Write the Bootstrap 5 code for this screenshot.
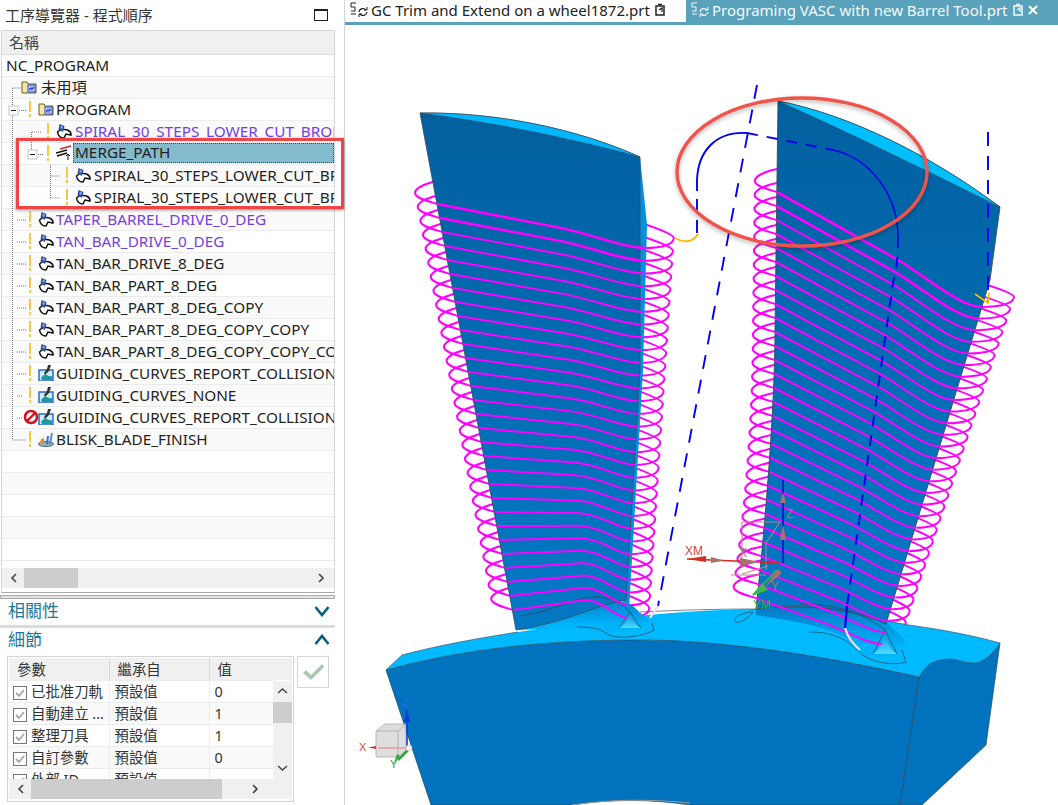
<!DOCTYPE html>
<html lang="zh-Hant">
<head>
    <meta charset="UTF-8">
    <meta name="viewport" content="width=device-width, initial-scale=1.0">
    <title>工序導覽器</title>
    <link href="https://cdn.jsdelivr.net/npm/bootstrap@5.3.0/dist/css/bootstrap.min.css" rel="stylesheet">
    <style>
        html, body { height: 805px; overflow: hidden; }
        body { font-family: "Noto Sans", "Noto Sans CJK TC", sans-serif; font-size: 15.3px; color: #222; background: #fff; }
        .nav-pane { width: 345px; height: 805px; flex: none; border-right: 1px solid #d4d4d4; }
        .pane-title { height: 30px; padding: 0 16px 0 5px; color: #333; font-size: 15px; }
        .max-box { width: 14px; height: 12px; border: 1px solid #222; border-top-width: 2px; }
        .tree-box { width: 334px; height: 563px; margin-left: 1px; border: 1px solid #d6d6d6; border-bottom-color: #aaa; }
        .tree-head { height: 24px; background: #f0f0f0; border-bottom: 1px solid #dcdcdc; padding-left: 7px; color: #444; font-size: 15px; }
        .tree-row { height: 22px; padding-bottom: 2px; border-bottom: 1px solid #ececec; white-space: nowrap; overflow: hidden; line-height: 20px; }
        .tree-row:nth-child(even) { background: #fafafa; }
        .lvl0 { padding-left: 4px; }
        .lvl1 { padding-left: 27px; }
        .lvl2 { padding-left: 45px; }
        .lvl3 { padding-left: 64px; }
        .lvl2 .item-ico, .lvl3 .item-ico { margin-right: 3px; }
        .warn { width: 2px; height: 16px; margin-right: 7px; flex: none; background: linear-gradient(#fdc63f 0 11px, transparent 11px 13px, #fdc63f 13px); }
        .warn-none { width: 16px; height: 16px; flex: none; }
        .item-ico { width: 16px; height: 16px; flex: none; margin-right: 2px; }
        .item-purple { color: #7440e0; }
        .item-picked { background: #84bacd; outline: 1px dotted #5a3a3a; outline-offset: -1px; height: 20px; line-height: 19px; padding: 0 0 0 2px; flex: 1; margin-left: -2px; }
        .tree-guides { left: 0; top: 0; pointer-events: none; }
        .call-box { left: 16px; top: 138px; width: 328px; height: 71px; border: 3px solid #f04545; box-shadow: 0 1px 3px rgba(0,0,0,.45); }
        .hbar { height: 20px; background: #f0f0f0; }
        .hbar-thumb { background: #cdcdcd; height: 100%; }
        .sash { height: 4px; margin: 2px 0 0 0; width: 335px; background: #e4e4e4; border: 1px solid #aaa; }
        .fold-row { height: 26px; width: 335px; padding: 0 5px 2px 8px; color: #1f7799; font-size: 17px; }
        .fold-line { height: 3px; width: 335px; background: #dcdcdc; }
        .grid-wrap { margin: 2px 0 0 7px; }
        .grid-box { width: 287px; height: 146px; border: 1px solid #d4d4d4; padding: 1px; }
        .param-table { table-layout: fixed; width: 264px; font-size: 14.4px; --bs-table-bg: transparent; }
        .param-table td, .param-table th { padding: 0 0 0 5px; height: 22px; line-height: 21px; font-weight: 400; white-space: nowrap; overflow: hidden; border-bottom: 1px solid #ececec; color: #333; }
        .param-table th { background: #f0f0f0; border-right: 1px solid #d8d8d8; padding-left: 8px; height: 22px; }
        .param-table tbody tr:nth-child(even) td { background: #fafafa; }
        .param-table td + td { border-left: 1px solid #ececec; }
        .head-strip { height: 22px; background: #f0f0f0; }
        .body-clip { height: 98px; }
        .vbar { width: 19px; background: #f0f0f0; }
        .vbar-thumb { height: 21px; background: #cdcdcd; margin-top: 0; }
        .apply-btn { width: 32px; height: 32px; margin-left: 3px; border: 1px solid #d4d4d4; border-radius: 0; padding: 0; }
        .tab-strip { height: 25px; border-bottom: 3px solid #5aa1bb; font-size: 15px; }
        .tab-idle { padding: 0 0 2px 4px; width: 341px; color: #222; }
        .tab-live { background: #5aa1bb; color: #f4fafc; flex: 1; padding: 0 0 2px 4px; }
        .tab-ico { width: 22px; height: 18px; flex: none; }
        .mini-ico { width: 12px; height: 14px; flex: none; }
        .scene { width: 713px; height: 780px; display: block; }
        .scene text { font-family: "Liberation Sans", sans-serif; }
    </style>
</head>
<body class="d-flex">

<svg width="0" height="0" class="position-absolute">
    <defs>
        <symbol id="ico-folder" viewBox="0 0 16 16">
            <path d="M1 3h5l1 2h8v9H1z" fill="#f3e6a6" stroke="#6d5f1e"/>
            <rect x="7" y="6" width="7" height="7" fill="#fff" stroke="#1a3fd0"/>
            <path d="M8.500 8h4M12.500 8v1.500h-4V11h4" fill="none" stroke="#1a3fd0"/>
        </symbol>
        <symbol id="ico-op" viewBox="0 0 16 16">
            <path d="M1.500 9l4-3 6 1q4 2 3.500 5l-5-1-2 4q-5.500 0-6.500-6z" fill="#fff" stroke="#111" stroke-width="1.500"/>
            <path d="M3.500 1l5 2-1.500 6-4.500-2.500z" fill="#2f4f9e"/>
            <path d="M5 2.500l2 1-.8 2.500-2-1z" fill="#8aa2d4"/>
        </symbol>
        <symbol id="ico-merge" viewBox="0 0 16 16">
            <path d="M0 8l11-3M1 11l10-3" stroke="#111" stroke-width="1.400" fill="none"/>
            <path d="M4 4l11-3" stroke="#c8232c" stroke-width="1.400"/>
            <path d="M12 15V9M10 11l2-2 2 2" stroke="#111" fill="none"/>
        </symbol>
        <symbol id="ico-guide" viewBox="0 0 16 16">
            <rect x="1" y="5" width="14" height="11" fill="#cfeaf9" stroke="#1a62d0" stroke-width="1.400"/>
            <path d="M3 13q3-5 6-3t5 1v4H4z" fill="#1a9a9a"/>
            <path d="M10 0h3l-2 6-4 4-1-2 3-4z" fill="#333"/>
        </symbol>
        <symbol id="ico-blisk" viewBox="0 0 16 16">
            <ellipse cx="8" cy="13" rx="7.500" ry="2.500" fill="#8fb3bd" stroke="#4a6a75"/>
            <path d="M2 12l1-4 3-1v6z" fill="#f08a24"/>
            <path d="M8 13l1-8h2l-1 8z" fill="#2f6fd0"/>
            <path d="M11 13l2-11h2l-2 11z" fill="#5a86d8"/>
        </symbol>
        <symbol id="ico-stop" viewBox="0 0 16 16">
            <circle cx="8" cy="8" r="6" fill="#fff" stroke="#d3121f" stroke-width="2.600"/>
            <path d="M3.500 12.500l9-9" stroke="#d3121f" stroke-width="2.400"/>
        </symbol>
        <symbol id="ico-check" viewBox="0 0 14 14">
            <rect x=".5" y=".5" width="13" height="13" fill="#fff" stroke="#777"/>
            <path d="M3 7l3 3 5-6" fill="none" stroke="#a5a5a5" stroke-width="1.800"/>
        </symbol>
        <symbol id="ico-part" viewBox="0 0 22 18">
            <path d="M2 2h5M2 2v4h4v4H2M2 13h5" fill="none" stroke="currentColor"/>
            <path d="M10 11a4 4 0 0 1 7-2M18 11a4 4 0 0 1-7 2" fill="none" stroke="currentColor" stroke-width="1.300"/>
            <path d="M15 9h3V6M13 13h-3v3" fill="none" stroke="currentColor"/>
        </symbol>
        <symbol id="ico-doc" viewBox="0 0 12 14">
            <path d="M2 3h8v9H2z" fill="none" stroke="currentColor" stroke-width="1.500"/>
            <path d="M4 1.500h4M5 7l3-2v4" fill="none" stroke="currentColor" stroke-width="1.300"/>
        </symbol>
    </defs>
</svg>

<aside class="nav-pane position-relative d-flex flex-column">
    <div class="pane-title d-flex align-items-center justify-content-between">
        <span>工序導覽器 - 程式順序</span>
        <span class="max-box"></span>
    </div>

    <div class="tree-box position-relative d-flex flex-column">
        <div class="tree-head d-flex align-items-center">名稱</div>
        <div class="flex-grow-1 overflow-hidden">
            <div class="tree-row d-flex align-items-center lvl0">NC_PROGRAM</div>
            <div class="tree-row d-flex align-items-center" style="padding-left:19px"><svg class="item-ico" style="margin-right:4px"><use href="#ico-folder"/></svg>未用項</div>
            <div class="tree-row d-flex align-items-center lvl1"><i class="warn"></i><svg class="item-ico"><use href="#ico-folder"/></svg>PROGRAM</div>
            <div class="tree-row d-flex align-items-center lvl2 item-purple"><i class="warn"></i><svg class="item-ico"><use href="#ico-op"/></svg>SPIRAL_30_STEPS_LOWER_CUT_BROKEN</div>
            <div class="tree-row d-flex align-items-center lvl2"><i class="warn"></i><svg class="item-ico"><use href="#ico-merge"/></svg><span class="item-picked">MERGE_PATH</span></div>
            <div class="tree-row d-flex align-items-center lvl3"><i class="warn"></i><svg class="item-ico"><use href="#ico-op"/></svg>SPIRAL_30_STEPS_LOWER_CUT_BROKEN</div>
            <div class="tree-row d-flex align-items-center lvl3"><i class="warn"></i><svg class="item-ico"><use href="#ico-op"/></svg>SPIRAL_30_STEPS_LOWER_CUT_BROKEN</div>
            <div class="tree-row d-flex align-items-center lvl1 item-purple"><i class="warn"></i><svg class="item-ico"><use href="#ico-op"/></svg>TAPER_BARREL_DRIVE_0_DEG</div>
            <div class="tree-row d-flex align-items-center lvl1 item-purple"><i class="warn"></i><svg class="item-ico"><use href="#ico-op"/></svg>TAN_BAR_DRIVE_0_DEG</div>
            <div class="tree-row d-flex align-items-center lvl1"><i class="warn"></i><svg class="item-ico"><use href="#ico-op"/></svg>TAN_BAR_DRIVE_8_DEG</div>
            <div class="tree-row d-flex align-items-center lvl1"><i class="warn"></i><svg class="item-ico"><use href="#ico-op"/></svg>TAN_BAR_PART_8_DEG</div>
            <div class="tree-row d-flex align-items-center lvl1"><i class="warn"></i><svg class="item-ico"><use href="#ico-op"/></svg>TAN_BAR_PART_8_DEG_COPY</div>
            <div class="tree-row d-flex align-items-center lvl1"><i class="warn"></i><svg class="item-ico"><use href="#ico-op"/></svg>TAN_BAR_PART_8_DEG_COPY_COPY</div>
            <div class="tree-row d-flex align-items-center lvl1"><i class="warn"></i><svg class="item-ico"><use href="#ico-op"/></svg>TAN_BAR_PART_8_DEG_COPY_COPY_COPY</div>
            <div class="tree-row d-flex align-items-center lvl1"><i class="warn"></i><svg class="item-ico"><use href="#ico-guide"/></svg>GUIDING_CURVES_REPORT_COLLISION</div>
            <div class="tree-row d-flex align-items-center lvl1"><i class="warn"></i><svg class="item-ico"><use href="#ico-guide"/></svg>GUIDING_CURVES_NONE</div>
            <div class="tree-row d-flex align-items-center lvl1"><svg class="warn-none" style="margin-left:-6px;margin-right:-1px"><use href="#ico-stop"/></svg><svg class="item-ico"><use href="#ico-guide"/></svg>GUIDING_CURVES_REPORT_COLLISION</div>
            <div class="tree-row d-flex align-items-center lvl1"><i class="warn"></i><svg class="item-ico"><use href="#ico-blisk"/></svg>BLISK_BLADE_FINISH</div>
            <div class="tree-row"></div>
            <div class="tree-row"></div>
            <div class="tree-row"></div>
            <div class="tree-row"></div>
            <div class="tree-row"></div>
        </div>
        <div class="hbar d-flex align-items-center mb-1">
            <svg width="22" height="20" viewBox="0 0 22 20"><path d="M14 6l-4 4 4 4" fill="none" stroke="#444" stroke-width="1.600"/></svg>
            <div class="hbar-thumb" style="width:54px"></div>
            <svg class="ms-auto" width="22" height="20" viewBox="0 0 22 20"><path d="M7 6l4 4-4 4" fill="none" stroke="#444" stroke-width="1.600"/></svg>
        </div>
        <!-- dotted connector lines of the tree -->
        <svg class="tree-guides position-absolute" width="60" height="420" viewBox="1 31 60 420">
            <path d="M11.500 88V440M11.500 88h9M16 110.500h9M31 132h9M30.500 132V150M35 154.500h8M49.500 165V198M49.500 176h9M49.500 198h9M16 220h9M16 242h9M16 264h9M16 286h9M16 308h9M16 330h9M16 352h9M16 374h9M16 396h6M16 418h6M11.500 440h13" fill="none" stroke="#777" stroke-dasharray="1 1"/>
            <g fill="#fff" stroke="#c4c4c4"><rect x="8" y="106" width="9" height="9"/><rect x="27" y="150" width="9" height="9"/></g>
            <path d="M10 110.500h5M29 154.500h5" stroke="#111"/>
        </svg>
    </div>

    <div class="sash"></div>
    <div class="fold-row d-flex align-items-center justify-content-between">
        <span>相關性</span>
        <svg width="16" height="12" viewBox="0 0 16 12"><path d="M1.500 2L8 10l6.500-8" fill="none" stroke="#05607f" stroke-width="2.600"/></svg>
    </div>
    <div class="fold-line"></div>
    <div class="fold-row d-flex align-items-center justify-content-between">
        <span>細節</span>
        <svg width="16" height="12" viewBox="0 0 16 12"><path d="M1.500 10L8 2l6.500 8" fill="none" stroke="#05607f" stroke-width="2.600"/></svg>
    </div>

    <div class="grid-wrap d-flex align-items-start">
        <div class="grid-box">
            <div class="d-flex">
                <div class="overflow-hidden">
                    <table class="table param-table mb-0">
                        <colgroup><col style="width:100px"><col style="width:100px"><col></colgroup>
                        <thead><tr><th>參數</th><th>繼承自</th><th class="border-end-0">值</th></tr></thead>
                    </table>
                </div>
                <div class="head-strip flex-grow-1"></div>
            </div>
            <div class="d-flex body-clip">
                <div class="overflow-hidden flex-grow-1">
                    <table class="table param-table mb-0">
                        <colgroup><col style="width:100px"><col style="width:100px"><col></colgroup>
                        <tbody>
                            <tr><td class="ps-1"><svg class="me-1 align-middle" width="14" height="14"><use href="#ico-check"/></svg>已批准刀軌</td><td>預設值</td><td>0</td></tr>
                            <tr><td class="ps-1"><svg class="me-1 align-middle" width="14" height="14"><use href="#ico-check"/></svg>自動建立 ...</td><td>預設值</td><td>1</td></tr>
                            <tr><td class="ps-1"><svg class="me-1 align-middle" width="14" height="14"><use href="#ico-check"/></svg>整理刀具</td><td>預設值</td><td>1</td></tr>
                            <tr><td class="ps-1"><svg class="me-1 align-middle" width="14" height="14"><use href="#ico-check"/></svg>自訂參數</td><td>預設值</td><td>0</td></tr>
                            <tr><td class="ps-1"><svg class="me-1 align-middle" width="14" height="14"><use href="#ico-check"/></svg>外部 ID</td><td>預設值</td><td></td></tr>
                        </tbody>
                    </table>
                </div>
                <div class="vbar d-flex flex-column">
                    <svg width="19" height="21" viewBox="0 0 19 21"><path d="M5 12l4.500-4 4.500 4" fill="none" stroke="#444" stroke-width="1.500"/></svg>
                    <div class="vbar-thumb"></div>
                    <svg class="mt-auto" width="19" height="21" viewBox="0 0 19 21"><path d="M5 8l4.500 4 4.500-4" fill="none" stroke="#444" stroke-width="1.500"/></svg>
                </div>
            </div>
            <div class="hbar d-flex align-items-center">
                <svg width="22" height="20" viewBox="0 0 22 20"><path d="M14 6l-4 4 4 4" fill="none" stroke="#444" stroke-width="1.600"/></svg>
                <div class="hbar-thumb" style="width:191px"></div>
                <svg class="ms-auto me-4" width="22" height="20" viewBox="0 0 22 20"><path d="M7 6l4 4-4 4" fill="none" stroke="#444" stroke-width="1.600"/></svg>
            </div>
        </div>
        <button type="button" class="btn btn-light bg-white apply-btn d-flex align-items-center justify-content-center">
            <svg width="24" height="20" viewBox="0 0 24 20"><path d="M2 11l3-3 5 5L21 2l2 3L10 18z" fill="#a9c9ad"/></svg>
        </button>
    </div>

    <div class="call-box position-absolute"></div>
</aside>

<main class="flex-grow-1 d-flex flex-column">
    <div class="tab-strip d-flex">
        <div class="tab-idle d-flex align-items-center">
            <svg class="tab-ico"><use href="#ico-part"/></svg>
            <span>GC Trim and Extend on a wheel1872.prt</span>
            <svg class="mini-ico ms-1"><use href="#ico-doc"/></svg>
        </div>
        <div class="tab-live d-flex align-items-center">
            <svg class="tab-ico"><use href="#ico-part"/></svg>
            <span>Programing VASC with new Barrel Tool.prt</span>
            <svg class="mini-ico ms-1"><use href="#ico-doc"/></svg>
            <svg class="ms-1" width="10" height="10" viewBox="0 0 10 10"><path d="M1 1l8 8M9 1l-8 8" stroke="#fff" stroke-width="2"/></svg>
        </div>
    </div>

    <svg class="scene" viewBox="345 25 713 780" xmlns="http://www.w3.org/2000/svg">
        <defs>
            <linearGradient id="blade-a" x1="0" y1="0" x2="0" y2="1"><stop offset="0" stop-color="#03609f"/><stop offset="1" stop-color="#0279c6"/></linearGradient>
            <linearGradient id="cone" x1="0" y1="0" x2="0" y2="1"><stop offset="0" stop-color="#0a86cf"/><stop offset="1" stop-color="#4fdcff"/></linearGradient>
            <linearGradient id="fillet" x1="0" y1="0" x2="0" y2="1"><stop offset="0" stop-color="#0279c6"/><stop offset=".8" stop-color="#00b4fb"/></linearGradient>
            <filter id="soft" x="-10%" y="-10%" width="120%" height="125%"><feDropShadow dx="0" dy="2" stdDeviation="2" flood-color="#000" flood-opacity=".3"/></filter>
        </defs>

        <g id="loops" fill="none" stroke="#ff00ff" stroke-width="2"></g>

        <!-- disc: top surface, front and side faces -->
        <path d="M386 670L402 655C440 645 480 638 518 632C600 620 660 611 754 609C810 609 860 616 909 625C945 630 975 636 1000 643C992 655 985 660 977 663C965 664 958 659 950 659C940 659 934 662 931 663C925 668 922 672 919 677C800 650 690 640 640 640C540 640 460 650 386 670z" fill="#00b9ff"/>
        <path d="M386 670C460 650 540 640 640 640C720 640 820 655 919 677L900 805H690C650 799 610 799 572 805H431z" fill="#0172bd" stroke="#2c4a60" stroke-width=".7"/>
        <path d="M919 677C922 672 925 668 931 663C934 662 940 659 950 659C958 659 965 664 977 663C985 660 992 655 1000 643L986 745L922 805H900z" fill="#0172bd" stroke="#2c4a60" stroke-width=".7"/>
        <path d="M386 670L402 655C440 645 480 638 518 632M640 612C680 610 720 609 754 609C810 609 860 616 909 625C945 630 975 636 1000 643" fill="none" stroke="#456" stroke-width=".7"/>
        <path d="M572 805C610 799 650 799 690 803" fill="none" stroke="#999" stroke-width="1"/>

        <!-- fillets under the blades -->
        <path d="M516 630C560 622 590 600 612 598L632 605L650 622C640 632 600 632 580 628z" fill="url(#fillet)"/>
        <path d="M756 609C790 604 850 606 886 622L905 640C905 655 880 662 862 652C850 630 800 622 756 615z" fill="url(#fillet)"/>
        <path d="M630 612Q632 624 641 628H619Q628 624 630 612z" fill="url(#cone)"/>
        <path d="M885 630Q887 648 897 654H873Q883 648 885 630z" fill="url(#cone)"/>

        <!-- blades -->
        <path d="M640 157L647 225L643 370L629 610L622 612L636 370z" fill="#0092e0"/>
        <path d="M420 113C500 112 580 130 640 157L640 370L626 600C600 603 570 622 516 630z" fill="url(#blade-a)" stroke="#3a4a55" stroke-width=".8"/>
        <path d="M420 113C500 112 580 130 640 157C570 138 490 122 420 113z" fill="#00b7ff" stroke="#3a4a55" stroke-width=".6"/>
        <path d="M778 101L775 330C775 380 770 480 756 609C790 604 850 606 886 624L990 280L1000 207C930 155 850 115 778 101z" fill="url(#blade-a)" stroke="#3a4a55" stroke-width=".9"/>
        <path d="M778 101C850 115 930 155 1000 207C925 170 850 133 778 101z" fill="#00bfff" stroke="#3a4a55" stroke-width=".6"/>

        <!-- fillet outlines -->
        <g fill="none" stroke="#33424e" stroke-width=".7">
            <path d="M577 627C590 627 600 628 609 635C620 640 645 636 654 630L652 623"/>
            <path d="M809 632C830 632 845 637 859 652C870 663 895 666 906 662L902 650"/>
            <path d="M753 612C745 612 735 616 735 620C735 625 745 622 753 612z"/>
            <path d="M520 616C550 612 570 600 590 597C610 595 622 604 630 612L619 628M641 628L630 612"/>
            <path d="M800 604C830 604 860 610 885 630L873 654M897 654L885 630"/>
        </g>

        <g id="passes" fill="none" stroke="#ff00ff" stroke-width="2"></g>

        <!-- tool axis and engage paths -->
        <g fill="none" stroke="#0000f0" stroke-width="1.900">
            <path d="M757 85L658 606" stroke-dasharray="14 11"/>
            <path d="M988 132V302" stroke-dasharray="14 10"/>
            <path d="M697 233V180" stroke-dasharray="13 8"/>
            <path d="M697 180C698 152 715 131 747 133"/>
            <path d="M747 133L833 150" stroke-dasharray="11 9"/>
            <path d="M833 150C870 158 898 195 898 237" stroke-width="1.500"/>
            <path d="M898 237C898 262 896 270 893 283L847 606" stroke-dasharray="11 9"/>
            <path d="M847 606L845 628" stroke-width="2.200"/>
        </g>
        <path d="M845 628C848 638 854 645 860 650" fill="none" stroke="#ffd6f0" stroke-width="2.200"/>
        <path d="M658 606L650 618" fill="none" stroke="#ffd6f0" stroke-width="2.200"/>
        <path d="M675 238C682 242 692 244 698 234" fill="none" stroke="#ffb900" stroke-width="1.900"/>
        <path d="M975 294L988 303L989 293" fill="none" stroke="#ffb900" stroke-width="1.700"/>

        <!-- work coordinate system -->
        <g fill="none" stroke="#b98a80" stroke-width="1">
            <path d="M742 522H780L766 543V570M742 522V568M742 574L768 566M731 575H766"/>
        </g>
        <path d="M783 480V563" stroke="#0a1fe0" stroke-width="2"/>
        <path d="M780 503L783 492L786 503zM780 540L783 524L786 540z" fill="#a9706e"/>
        <path d="M687 559L780 563" stroke="#d2281e" stroke-width="1.500"/>
        <path d="M687 559L706 556V562z" fill="#d92c1e"/>
        <path d="M711 557L722 560V561L711 563zM740 558L760 562L740 566z" fill="#a9706e"/>
        <path d="M753 595L777 570" stroke="#2eae46" stroke-width="2"/>
        <path d="M752 596L762 583L768 590z" fill="#3bb84a"/>
        <path d="M765 587L778 569L782 573z" fill="#a9706e"/>
        <g font-size="12">
            <text x="685" y="555" fill="#d2443a">XM</text>
            <text x="739" y="557" fill="#a8756f">X</text>
            <text x="786" y="518" fill="#a8756f">Z</text>
            <text x="771" y="590" fill="#a8756f">Y</text>
            <text x="753" y="609" fill="#3aa650">YM</text>
        </g>

        <!-- view triad -->
        <path d="M376 731L385 724H406V750L398 757H376zM376 731H398V757M398 731L406 724" fill="#d8d8d8" fill-opacity=".85" stroke="#aaa" stroke-width=".8"/>
        <path d="M407 747V720" stroke="#0a3ce0" stroke-width="1.600"/>
        <path d="M404 722L407 708L410 722z" fill="#0a3ce0"/>
        <path d="M409 748H378" stroke="#e4a0a0" stroke-width="1.600"/>
        <path d="M376 746L368 747.500L376 749z" fill="#d9342a"/>
        <path d="M408 750L398 760" stroke="#2ea23c" stroke-width="2.500"/>
        <path d="M400 756L394 763L397 754z" fill="#2ea23c"/>
        <circle cx="409" cy="748" r="3" fill="#f2f2f2" stroke="#bbb" stroke-width=".5"/>
        <g font-size="11">
            <text x="402" y="707" fill="#2a6ae8">Z</text>
            <text x="359" y="751" fill="#d2443a">X</text>
            <text x="390" y="768" fill="#2ea23c">Y</text>
        </g>

        <!-- markup ellipse -->
        <ellipse cx="802" cy="172" rx="125" ry="74" fill="none" stroke="#f0524a" stroke-width="3.400" filter="url(#soft)"/>
    </svg>
</main>

<script>
    // coil toolpaths round the two blades, each pass: loop, loop, front stroke
    const SVG_NS = 'http://www.w3.org/2000/svg';

    function addPath(groupId, d, width) {
        const p = document.createElementNS(SVG_NS, 'path');
        p.setAttribute('d', d);
        if (width) p.setAttribute('stroke-width', width);
        document.getElementById(groupId).appendChild(p);
    }

    function buildCoil(b) {
        for (let i = 0; i < b.count; i++) {
            const t = i / (b.count - 1);
            const yL = b.startY + b.stepY * i;
            const drop = b.dropTop + (b.dropEnd - b.dropTop) * t;
            const yR = yL + drop;
            const xL = b.leftX(yL);
            const xR = b.rightX(yR);
            const w = xR - xL;
            const wl = b.loopLeft;
            const wr = b.loopRightTop + (b.loopRightEnd - b.loopRightTop) * t;

            addPath('loops', `M${xL} ${yL}C${xL - 10} ${yL - 3} ${xL - wl} ${yL - 6} ${xL - wl} ${yL - 11}C${xL - wl} ${yL - 17} ${xL - 8} ${yL - 22} ${xL + 6} ${yL - 24}`);
            addPath('loops', `M${xR} ${yR}C${xR + wr * 0.6} ${yR} ${xR + wr} ${yR - 4} ${xR + wr} ${yR - 10}C${xR + wr} ${yR - 13} ${xR + wr * 0.5} ${yR - 19} ${xR - 8} ${yR - 26}`);

            // straight-ish run to the middle, then an S down that flattens at the edge
            const mx = xL + w * 0.6;
            const my = yL + drop * b.midShare - b.hump * t * t;
            const s = (my - yL) / (mx - xL);
            addPath('passes', `M${xL} ${yL}C${xL + w * 0.2} ${yL + w * 0.2 * s} ${mx - w * 0.2} ${my - w * 0.2 * s} ${mx} ${my}C${mx + w * 0.16} ${my + w * 0.16 * s * 1.15} ${xR - w * 0.1} ${yR} ${xR} ${yR}`, i < 2 ? 2.6 : 0);
        }
    }

    buildCoil({
        count: 30, startY: 204, stepY: 14, dropTop: 44, dropEnd: 8, midShare: 0.55, hump: 14,
        loopLeft: 22, loopRightTop: 28, loopRightEnd: 22,
        leftX: y => 420 + (y - 113) * 0.1876,
        rightX: y => 647 - (y - 224) * 0.05
    });
    buildCoil({
        count: 30, startY: 192, stepY: 14, dropTop: 115, dropEnd: 46, midShare: 0.6, hump: 0,
        loopLeft: 22, loopRightTop: 32, loopRightEnd: 20,
        leftX: y => y < 330 ? 778 - (y - 101) * 0.013 : 775 - (y - 330) * (y - 330) * 0.00027,
        rightX: y => 990 - (y - 280) * 0.297
    });
</script>
<script src="https://cdn.jsdelivr.net/npm/bootstrap@5.3.0/dist/js/bootstrap.bundle.min.js"></script>
</body>
</html>
